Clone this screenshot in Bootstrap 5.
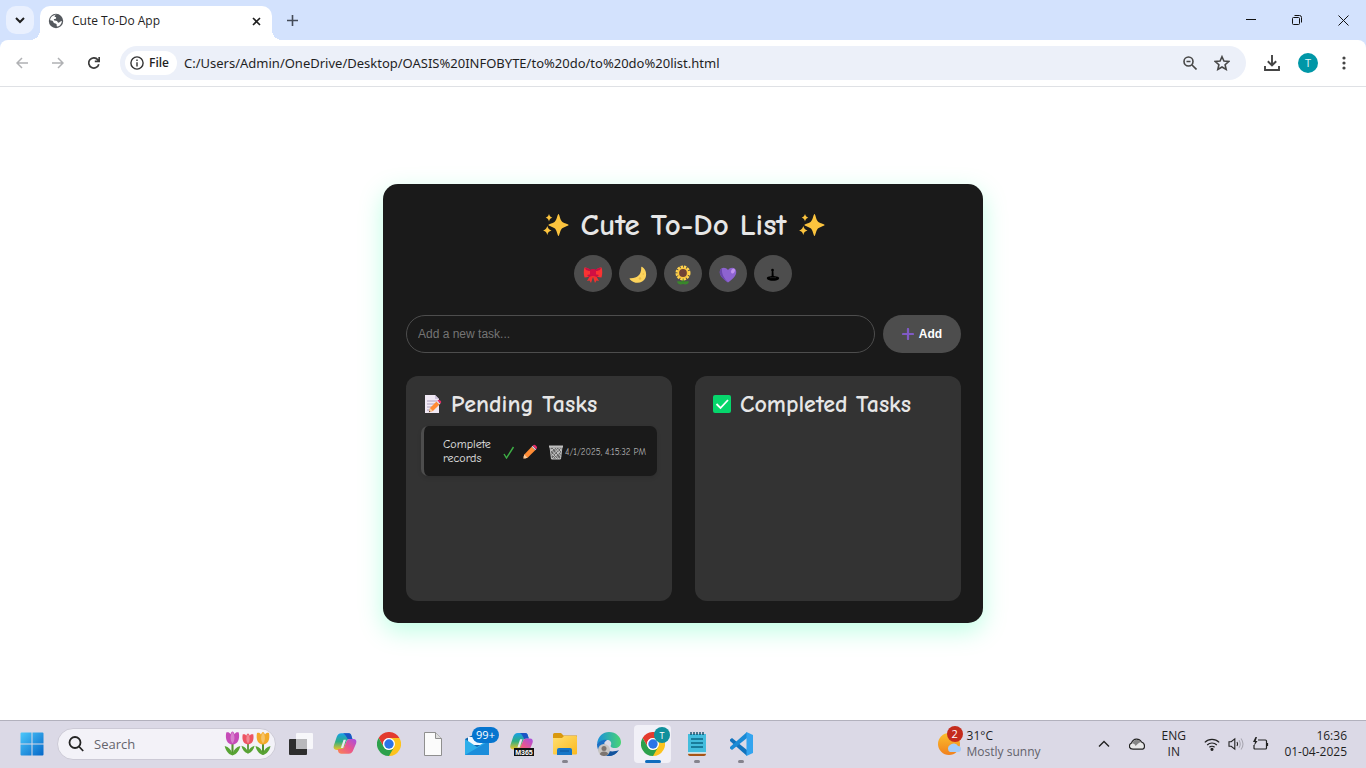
<!DOCTYPE html>
<html lang="en">
<head>
<meta charset="utf-8">
<meta name="viewport" content="width=device-width, initial-scale=1">
<title>Cute To-Do App</title>
<link href="https://cdn.jsdelivr.net/npm/bootstrap@5.3.0/dist/css/bootstrap.min.css" rel="stylesheet">
<style>
  body { font-family: "Open Sans", "Noto Sans", sans-serif; font-size: 12px; line-height: 16px; color: #1f1f1f; background: #fff; }
  button { font: inherit; color: inherit; border: 0; background: none; padding: 0; display: inline-flex; align-items: center; justify-content: center; }
  svg { display: block; flex: none; }

  /* window frame */
  .titlebar { background: #d3e2fd; height: 40px; padding-left: 6px; }
  .tab-search { width: 28px; height: 28px; border-radius: 10px; background: #e9f0fe; margin-top: 6px; }
  .tab-page { position: relative; width: 232px; height: 34px; margin: 6px 0 0 6px; padding: 0 8px 4px; border-radius: 10px 10px 0 0; background: #fff; }
  .tab-page::before, .tab-page::after { content: ""; position: absolute; bottom: 0; width: 10px; height: 10px; }
  .tab-page::before { left: -10px; background: radial-gradient(circle at 0 0, transparent 10px, #fff 10px); }
  .tab-page::after { right: -10px; background: radial-gradient(circle at 100% 0, transparent 10px, #fff 10px); }
  .tab-close { width: 16px; height: 16px; }
  .tab-new { width: 28px; height: 28px; margin: 6px 0 0 6px; }
  .win-btn { width: 46px; height: 40px; }
  .toolbar-wrap { background: #d3e2fd; }
  .toolbar { background: #fff; height: 47px; padding: 0 4px; border-bottom: 1px solid #dfe1e5; border-radius: 8px 8px 0 0; }
  .tool-btn { width: 36px; height: 34px; }
  .address { height: 34px; border-radius: 17px; background: #ecf0f9; margin: 0 8px; padding: 0 8px 0 5px; min-width: 0; }
  .file-chip { height: 24px; border-radius: 12px; background: #fff; padding: 0 8px 0 5px; gap: 5px; font-weight: 600; }
  .address input { border: 0; background: none; outline: 0; padding: 0 0 0 7px; min-width: 0; font-size: 13px; font-family: "Noto Sans", sans-serif; color: #1f1f1f; }
  .addr-btn { width: 32px; height: 32px; }
  .avatar { width: 20px; height: 20px; border-radius: 50%; background: #0097a7; color: #e3f6f8; font-size: 11px; }

  /* to-do app */
  .todo-app { width: 100%; max-width: 600px; padding: 23px 22px 22px 23px; border-radius: 15px; background: #1a1a1a; color: #e6e6e6; box-shadow: 0 8px 24px rgba(0, 255, 150, .26); font-family: "Comic Neue", "Inter", sans-serif; }
  .todo-title { font-size: 31px; line-height: 36px; font-weight: 700; gap: 12px; margin: 0 0 12px; }
  .theme-row { gap: 7px; margin-bottom: 23px; padding-right: 1px; }
  .theme-btn { width: 38px; height: 37px; border-radius: 50%; background: #4d4d4d; padding-top: 2px; }
  .task-entry { gap: 8px; margin-bottom: 23px; }
  .task-entry input { height: 38px; min-width: 0; border: 1px solid #4d4d4d; border-radius: 19px; background: #1a1a1a; color: #e6e6e6; padding: 0 11px; font-family: "Liberation Sans", sans-serif; font-size: 12px; }
  .task-entry input::placeholder { color: #757575; }
  .add-btn { width: 78px; height: 38px; border-radius: 19px; background: #4d4d4d; color: #fff; font-family: "Liberation Sans", sans-serif; font-weight: 700; gap: 5px; }
  .task-cols { gap: 23px; }
  .task-col { flex: 1 1 0; min-width: 0; min-height: 225px; padding: 15px; border-radius: 12px; background: #333; }
  .task-col h2 { font-size: 24px; line-height: 26px; font-weight: 700; gap: 9px; margin: 0 0 9px; padding-left: 3px; white-space: nowrap; }
  .task-item { min-height: 50px; border-left: 3px solid #4d4d4d; border-radius: 7px; background: #1a1a1a; padding: 0 11px 0 19px; box-shadow: 0 2px 4px rgba(0, 0, 0, .1); }
  .task-name { width: 54px; font-size: 12px; line-height: 14px; }
  .task-tools { gap: 6px; padding-top: 2px; }
  .task-tools button { width: 15px; height: 20px; }
  .task-tools button:last-child { margin-left: 5px; }
  .task-time { color: #b3b3b3; font-size: 9px; line-height: 12px; white-space: nowrap; font-weight: 400; padding-top: 2px; }

  /* taskbar */
  .taskbar { background: #dbd9e6; height: 48px; border-top: 1px solid #b2b1bd; padding: 0 0 2px 10px; }
  .dock-btn { position: relative; width: 44px; height: 45px; }
  .dock-btn.is-open::after { content: ""; position: absolute; bottom: 3px; left: 19px; width: 6px; height: 3px; border-radius: 2px; background: #85838d; }
  .dock-btn.is-active::before { content: ""; position: absolute; left: 3px; top: 4px; width: 37px; height: 38px; border-radius: 4px; background: #f1f0f7; }
  .dock-btn.is-active::after { left: 14px; width: 16px; background: #0f6cbd; }
  .dock-btn svg { position: relative; }
  .search-box { width: 219px; height: 32px; margin: 0 3px; border: 1px solid #cccad6; border-radius: 16px; background: #f3f2f8; padding: 0 4px 0 10px; }
  .search-box input { width: 100px; border: 0; outline: 0; background: none; padding: 0; margin-left: 10px; font-size: 13px; }
  .search-box input::placeholder { color: #65646c; opacity: 1; }
  .count-badge { position: absolute; left: 17px; top: 6px; width: 27px; height: 16px; border-radius: 8px; background: #0675cf; color: #fff; font-size: 11px; }
  .weather { width: 149px; gap: 5px; justify-content: flex-start; text-align: left; position: relative; }
  .weather-count { position: absolute; left: 9px; top: -2px; width: 16px; height: 16px; border-radius: 50%; background: #c42b1c; color: #fff; font-size: 11px; text-align: center; }
  .text-soft { color: #62616b; }
  .tray-btn { height: 44px; padding: 0 8px; }
  .tray-cloud { padding-right: 9px; }
  .tray-quick { gap: 8px; padding: 0 6px 0 10px; }
  .clock { width: 91px; padding-right: 19px; text-align: right; justify-content: flex-end; }
</style>
</head>
<body class="d-flex flex-column vh-100 overflow-hidden">

<svg width="0" height="0" class="position-absolute" aria-hidden="true">
  <defs>
    <linearGradient id="gWin" x1="0" y1="0" x2="1" y2="1"><stop offset="0" stop-color="#4cc8fb"/><stop offset="1" stop-color="#0567c8"/></linearGradient>
    <linearGradient id="gCopA" x1="0" y1="0" x2="0" y2="1"><stop offset="0" stop-color="#189fe8"/><stop offset=".5" stop-color="#2fae82"/><stop offset="1" stop-color="#f1c426"/></linearGradient>
    <linearGradient id="gCopB" x1="1" y1="0" x2="0" y2="1"><stop offset="0" stop-color="#a44ee6"/><stop offset=".5" stop-color="#e9558d"/><stop offset="1" stop-color="#fb8750"/></linearGradient>
    <linearGradient id="gFolder" x1="0" y1="0" x2="1" y2="1"><stop offset="0" stop-color="#ffdf71"/><stop offset="1" stop-color="#fbb91e"/></linearGradient>
    <linearGradient id="gEdge" x1="0" y1="0" x2="1" y2="0"><stop offset="0" stop-color="#1b8fdc"/><stop offset="1" stop-color="#48d573"/></linearGradient>
    <linearGradient id="gSun" x1="0" y1="0" x2="0" y2="1"><stop offset="0" stop-color="#fbc02d"/><stop offset="1" stop-color="#f1801d"/></linearGradient>
    <symbol id="sparkles" viewBox="0 0 26 26"><g fill="#fcc43e"><path d="M15.500 2c1 0 1.400 5.500 3.400 7.500 2 1.900 6.600 2.400 6.600 3.500s-4.600 1.700-6.600 3.600c-2 2-2.400 7.400-3.400 7.400s-1.500-5.400-3.500-7.400c-1.900-1.900-6.500-2.500-6.500-3.600s4.600-1.600 6.500-3.500c2-2 2.500-7.500 3.500-7.500z"/><path d="M6 2c.6 2.100 1.200 2.900 3.300 3.700C7.200 6.500 6.600 7.300 6 9.400 5.400 7.300 4.800 6.500 2.700 5.700 4.800 4.900 5.400 4.100 6 2zM4.300 14c.7 2.500 1.500 3.500 4.200 4.400-2.700.9-3.500 1.900-4.200 4.500-.7-2.600-1.500-3.600-4.200-4.500C2.800 17.500 3.600 16.500 4.300 14z"/></g></symbol>
    <symbol id="copilot" viewBox="0 0 26 24"><path d="M9 1h8c2 0 2.500 1 3 3l1 3h-3c-2 0-3 1-3.500 3l-2 6c-.7 2-2 3-4 3H4c-3 0-4-2-3-5L4 5c.8-2.500 2.500-4 5-4z" fill="url(#gCopA)"/><path d="M11 1h6c2 0 2.500 1 3 3l1 3h-3l-2 .5C14 4.500 14 2.500 11 1z" fill="#1c55c5"/><path d="M17 23H9c-2 0-3-1-3.500-3L5 18h4c2 0 3-1 3.500-3l2-5c.7-2 2-3 4-3H22c3 0 4 2 3 5l-3 7c-.8 2.500-2.500 4-5 4z" fill="url(#gCopB)"/><path d="M11 17l3-9h-2.500l-3 9z" fill="#e9e8f4"/></symbol>
    <symbol id="chrome" viewBox="0 0 24 24"><path d="M12 12V6h10.400A12 12 0 0 1 12 24z" fill="#fcc31e"/><path d="M12 12l5.200 3L12 24z" fill="#fcc31e"/><path d="M1.600 6A12 12 0 0 1 22.400 6H12a6 6 0 0 0-5.200 9z" fill="#e33b2e"/><path d="M1.600 6l5.200 9A6 6 0 0 0 17.200 15L12 24A12 12 0 0 1 1.600 6z" fill="#2da14c"/><circle cx="12" cy="12" r="6" fill="#fff"/><circle cx="12" cy="12" r="4.700" fill="#2b74e8"/></symbol>
    <symbol id="pencil" viewBox="0 0 16 16"><path d="M1 15l1.300-4.600 7.400-7.600 3.500 3.400-7.600 7.500z" fill="#ff8c35"/><path d="M1 15l1.300-4.600 3.300 3.300z" fill="#f7cda0"/><path d="M1 15l.5-1.700 1.300 1.200z" fill="#443a3a"/><path d="M9.700 2.800l1-1 3.500 3.400-1 1z" fill="#d9d5e3"/><path d="M10.700 1.800c1.200-1.200 2-1.300 3.300-.1 1.500 1.300 1.400 2.200.2 3.500z" fill="#e72c68"/></symbol>
    <symbol id="tulip" viewBox="0 0 16 24"><path d="M8 10v13" stroke="#54932f" stroke-width="2"/><path d="M8 23.500C4 22.500 1.500 19 .5 14.500c4 1 6 3.500 7.500 7 1.500-3.500 3.500-6 7.500-7-1 4.500-3.500 8-7.500 9z" fill="#58a334"/><path d="M2 1.500C4 1 5 1.500 6 3c.7-1.500 1.200-2.500 2-2.500s1.300 1 2 2.500c1-1.500 2-2 4-1.500C15.300 8 13 13 8 13S.7 8 2 1.500z" fill="currentColor"/><path d="M8 1c2.500 3 2.500 8 0 11-2.500-3-2.500-8 0-11z" fill="#fff" opacity=".3"/></symbol>
  </defs>
</svg>

<header>
  <div class="titlebar d-flex">
    <button class="tab-search" type="button" aria-label="Search tabs"><svg width="10" height="7" viewBox="0 0 10 7" fill="none" stroke="#1f1f1f" stroke-width="2"><path d="M1 1l4 4 4-4"/></svg></button>
    <div class="tab-page d-flex align-items-center">
      <svg width="16" height="16" viewBox="0 0 16 16"><circle cx="8" cy="8" r="7.200" fill="#55595e"/><path d="M9 1.800c-2 .4-2.700 1.200-2.300 2 .7.300 1.500.2 1.500 1.200-.3 1.300-2 .6-2.400 1.600 0 1 .8 1 2.200 1.100 1.700.2 1.300 1.800 2.700 2 1.200-.4 1.600-1.700 3.200-1.700-.2 2.500-1.500 4.600-4 5.600-1 0-1.400-.5-1.200-1.500.2-1.500-1.100-1.500-2.200-1.800-1.400-.5-.8-1.800-2-2.600L2.100 7.200C2.500 4 5 1.700 9 1.800z" fill="#fff"/></svg>
      <span class="ms-2 me-auto">Cute To-Do App</span>
      <button class="tab-close" type="button" aria-label="Close tab"><svg width="9" height="9" viewBox="0 0 9 9" stroke="#1f1f1f" stroke-width="1.600"><path d="M1 1l7 7M8 1L1 8"/></svg></button>
    </div>
    <button class="tab-new" type="button" aria-label="New tab"><svg width="11" height="11" viewBox="0 0 11 11" stroke="#444b58" stroke-width="1.600"><path d="M5.500 0v11M0 5.500h11"/></svg></button>
    <div class="d-flex ms-auto">
      <button class="win-btn" type="button" aria-label="Minimise"><svg width="10" height="10" viewBox="0 0 10 10" stroke="#111"><path d="M0 4.500h10"/></svg></button>
      <button class="win-btn" type="button" aria-label="Restore"><svg width="10" height="10" viewBox="0 0 10 10" fill="none" stroke="#111"><rect x=".5" y="2.500" width="7" height="7" rx="1"/><path d="M2.500.5h5a2 2 0 0 1 2 2v5"/></svg></button>
      <button class="win-btn" type="button" aria-label="Close"><svg width="11" height="11" viewBox="0 0 11 11" stroke="#111"><path d="M.5.5l10 10M10.500.5l-10 10"/></svg></button>
    </div>
  </div>
  <div class="toolbar-wrap">
    <div class="toolbar d-flex align-items-center">
      <button class="tool-btn" type="button" aria-label="Back"><svg width="12" height="12" viewBox="0 0 12 12" fill="none" stroke="#b0b1b4" stroke-width="1.500"><path d="M12 6H1M6 1L1 6l5 5"/></svg></button>
      <button class="tool-btn" type="button" aria-label="Forward"><svg width="12" height="12" viewBox="0 0 12 12" fill="none" stroke="#b0b1b4" stroke-width="1.500"><path d="M0 6h11M6 1l5 5-5 5"/></svg></button>
      <button class="tool-btn" type="button" aria-label="Reload"><svg width="12" height="12" viewBox="0 0 12 12" fill="none" stroke="#3c3c3c" stroke-width="1.700"><path d="M10.800 7.200A5.100 5.100 0 1 1 9.800 2.700L11 4M11.200 0v4.400H6.800"/></svg></button>
      <div class="address d-flex align-items-center flex-grow-1">
        <button class="file-chip" type="button"><svg width="14" height="14" viewBox="0 0 14 14" fill="none" stroke="#333" stroke-width="1.400"><circle cx="7" cy="7" r="6.100"/><path d="M7 6.200v4.300M7 3.500V5"/></svg>File</button>
        <input class="flex-grow-1" type="text" aria-label="Address" value="C:/Users/Admin/OneDrive/Desktop/OASIS%20INFOBYTE/to%20do/to%20do%20list.html">
        <button class="addr-btn" type="button" aria-label="Zoom"><svg width="14" height="14" viewBox="0 0 14 14" fill="none" stroke="#474747" stroke-width="1.600"><circle cx="5.500" cy="5.500" r="4.500"/><path d="M9 9l4.500 4.500M3.500 5.500h4"/></svg></button>
        <button class="addr-btn" type="button" aria-label="Bookmark"><svg width="16" height="16" viewBox="0 0 15 15" fill="none" stroke="#474747" stroke-width="1.500"><path d="M7.500 1.600l1.800 4.100 4.500.4-3.400 3 1 4.400-3.900-2.300-3.900 2.300 1-4.400-3.400-3 4.500-.4z"/></svg></button>
      </div>
      <button class="tool-btn" type="button" aria-label="Downloads"><svg width="16" height="16" viewBox="0 0 16 16" fill="none" stroke="#444" stroke-width="1.900"><path d="M8 0v10M3.800 6.200L8 10.300l4.200-4.100M1 11v4h14v-4"/></svg></button>
      <button class="tool-btn" type="button" aria-label="Profile"><span class="avatar d-flex align-items-center justify-content-center">T</span></button>
      <button class="tool-btn" type="button" aria-label="Menu"><svg width="4" height="14" viewBox="0 0 4 14" fill="#444"><circle cx="2" cy="2" r="1.600"/><circle cx="2" cy="7" r="1.600"/><circle cx="2" cy="12" r="1.600"/></svg></button>
    </div>
  </div>
</header>

<main class="d-flex flex-grow-1 align-items-center justify-content-center">
  <section class="todo-app">
    <h1 class="todo-title d-flex align-items-center justify-content-center"><svg width="26" height="26"><use href="#sparkles"/></svg>Cute To-Do List<svg width="26" height="26"><use href="#sparkles"/></svg></h1>
    <div class="theme-row d-flex justify-content-center">
      <button class="theme-btn" type="button" aria-label="Bow theme"><svg width="20" height="18" viewBox="0 0 20 18"><path d="M8 8l-4 7 2.500-.6L8 17l2-6 2 6 1.500-2.600L16 15l-4-7z" fill="#f3312f"/><path d="M9 6C6 2 3 1 1.500 1.500.5 4 .5 8 1.500 11.500c3 0 5.500-1 7.500-3zM11 6c3-4 6-5 7.500-4.500 1 2.500 1 6.500 0 10-3 0-5.500-1-7.500-3z" fill="#fa3332"/><path d="M2 2c3-.5 5 1 7 3H6L3 4zM18 2c-3-.5-5 1-7 3h3l3-1zM4 9l5-1v2l-3 1zM16 9l-5-1v2l3 1z" fill="#c70f43"/><rect x="7" y="3" width="6" height="7" rx="2" fill="#d10f43"/></svg></button>
      <button class="theme-btn" type="button" aria-label="Moon theme"><svg width="18" height="18" viewBox="0 0 18 18"><path d="M13 .8c4 2.500 5 7.200 3.400 11.200C14 17.400 6 18.800 1 13.500c-.7-.8-.4-1.300.4-1.200C8.500 12.500 12.500 8.500 12.200 1.600c0-.7.300-1.100.8-.8z" fill="#fdd35b"/><circle cx="11" cy="12.500" r="1.300" fill="#eabb43"/><circle cx="14.300" cy="8" r=".8" fill="#eabb43"/></svg></button>
      <button class="theme-btn" type="button" aria-label="Sunflower theme"><svg width="18" height="20" viewBox="0 0 18 20"><path d="M8 12h2v6H8z" fill="#35832a"/><path d="M9 19c-3 1-5.500 0-6-2.500 3-.5 5 0 6 1.200 1-1.200 3-1.700 6-1.200-.5 2.500-3 3.500-6 2.500z" fill="#39882b"/><circle cx="9" cy="8" r="5.900" fill="none" stroke="#ffd24f" stroke-width="3.200" stroke-dasharray="2.300 .8"/><circle cx="9" cy="8" r="5.500" fill="#fbc83f"/><circle cx="9" cy="8" r="3.900" fill="#704336"/></svg></button>
      <button class="theme-btn" type="button" aria-label="Heart theme"><svg width="18" height="18" viewBox="0 0 18 18"><path d="M9 16.500C2 11.500 0 8 1 4.500 2 1.300 6.500.6 9 4c2.500-3.400 7-2.700 8 .5 1 3.500-1 7-8 12z" fill="#8d63d0"/><path d="M1 4.500C0 8 2 11.500 9 16.500 5 12 2.500 8 3 3 2 3 1.300 3.600 1 4.500z" fill="#6947aa"/><ellipse cx="14" cy="5" rx="1.800" ry="2.700" transform="rotate(30 14 5)" fill="#c092ef"/></svg></button>
      <button class="theme-btn" type="button" aria-label="Dark theme"><svg width="14" height="14" viewBox="0 0 14 14"><circle cx="6.500" cy="2" r="1.300"/><path d="M5.800 2h1.500l.4 6 4 .8c1.500.5 2 1.500.8 2.600-2.500 1.800-8.500 1.800-11 0C.3 10.300.8 9.200 2 8.800L5.600 8z"/><path d="M4 9.700h6" stroke="#4d4d4d" stroke-width=".4"/></svg></button>
    </div>
    <form class="task-entry d-flex" onsubmit="return false">
      <input class="flex-grow-1" type="text" aria-label="New task" placeholder="Add a new task...">
      <button class="add-btn" type="submit"><svg width="12" height="12" viewBox="0 0 12 12" stroke="#805ac6" stroke-width="2.200" stroke-linecap="round"><path d="M6 1v10M1 6h10"/></svg>Add</button>
    </form>
    <div class="task-cols d-flex">
      <section class="task-col">
        <h2 class="d-flex align-items-center"><svg width="18" height="20" viewBox="0 0 18 20"><path d="M1 1h10l4 4v14H1z" fill="#f1e9f5"/><path d="M11 1l4 4h-4z" fill="#cfc3dd"/><path d="M3 7h10M3 10h8M3 13h6M3 16h6" stroke="#aca0bd"/><use href="#pencil" x="4" y="5" width="14" height="14"/></svg>Pending Tasks</h2>
        <ul class="list-unstyled mb-0">
          <li class="task-item d-flex align-items-center">
            <span class="task-name">Complete records</span>
            <span class="task-tools d-flex align-items-center flex-grow-1 ms-1">
              <button type="button" aria-label="Complete"><svg width="12" height="13" viewBox="0 0 12 13" fill="none" stroke="#3daf45" stroke-width="1.400"><path d="M1 8l2.500 4L10.500 1"/></svg></button>
              <button type="button" aria-label="Edit"><svg width="16" height="16"><use href="#pencil"/></svg></button>
              <button type="button" aria-label="Delete"><svg width="14" height="15" viewBox="0 0 14 15" fill="none" stroke="#bfbfbf"><path d="M1 2l1.500 12h9L13 2z" fill="#666"/><path d="M0 1.500h14" stroke-width="2"/><path d="M2 6l3-3 7 9M2.500 11l8-8 2 3M2 4l8 10M3 14l9-9M7 3l5 6M2.500 8.500L8 14"/></svg></button>
            </span>
            <time class="task-time">4/1/2025, 4:15:32 PM</time>
          </li>
        </ul>
      </section>
      <section class="task-col">
        <h2 class="d-flex align-items-center"><svg width="18" height="18" viewBox="0 0 18 18"><rect width="18" height="18" rx="2" fill="#06d66c"/><path d="M3.500 9l4 4 7.500-8" fill="none" stroke="#fff" stroke-width="1.800"/></svg>Completed Tasks</h2>
      </section>
    </div>
  </section>
</main>

<footer class="taskbar d-flex align-items-center">
  <button class="dock-btn" type="button" aria-label="Start"><svg width="24" height="24" viewBox="0 0 24 24" fill="url(#gWin)"><path d="M1.500.5h10v11H.5v-10a1 1 0 0 1 1-1zM12.500.5h10a1 1 0 0 1 1 1v10h-11zM.5 12.500h11v11h-10a1 1 0 0 1-1-1zM12.500 12.500h11v10a1 1 0 0 1-1 1h-10z"/></svg></button>
  <label class="search-box d-flex align-items-center">
    <svg width="16" height="16" viewBox="0 0 16 16" fill="none" stroke="#242424" stroke-width="1.800"><circle cx="7" cy="6.500" r="5.500"/><path d="M11 10.500l4.200 4.500"/></svg>
    <input type="text" placeholder="Search" aria-label="Search">
    <span class="d-flex ms-auto"><svg width="17" height="25" color="#c64bb8"><use href="#tulip"/></svg><svg width="14" height="25" color="#ed5463"><use href="#tulip"/></svg><svg width="16" height="25" color="#f2a928"><use href="#tulip"/></svg></span>
  </label>
  <button class="dock-btn" type="button" aria-label="Task view"><svg width="24" height="24" viewBox="0 0 24 24"><rect x="0" y="7" width="18" height="16" rx="1" fill="#2e2e2e"/><rect x="7" y="1" width="17" height="16" rx="1" fill="#fafafc" opacity=".9"/><path d="M7 7h11v10H7z" fill="#b8b8bb"/></svg></button>
  <button class="dock-btn" type="button" aria-label="Copilot"><svg width="24" height="23"><use href="#copilot"/></svg></button>
  <button class="dock-btn" type="button" aria-label="Chrome"><svg width="24" height="24"><use href="#chrome"/></svg></button>
  <button class="dock-btn" type="button" aria-label="Document"><svg width="18" height="24" viewBox="0 0 18 24" fill="#fbfbfb" stroke="#8f8f8f"><path d="M.5.500h11l6 6v17H.5z"/><path d="M11.500.5v6h6" fill="#dedede"/></svg></button>
  <button class="dock-btn" type="button" aria-label="Mail"><svg width="24" height="22" viewBox="0 0 24 22"><path d="M0 6l12-6 12 6v16H0z" fill="#1165ad"/><path d="M3 4h18v8H3z" fill="#f1f8ff"/><path d="M0 6l12 8 12-8v16H0z" fill="#2daeea"/><path d="M0 22l24-14v14z" fill="#1b8ddb"/></svg><span class="count-badge d-flex align-items-center justify-content-center">99+</span></button>
  <button class="dock-btn" type="button" aria-label="Microsoft 365"><svg width="25" height="24" viewBox="0 0 25 24"><use href="#copilot" x="0" y="0" width="25" height="22"/><rect x="5" y="16" width="20" height="8" fill="#111"/><text x="15" y="22.700" text-anchor="middle" font-size="7" font-weight="700" fill="#fff" font-family="Liberation Sans">M365</text></svg></button>
  <button class="dock-btn is-open" type="button" aria-label="File Explorer"><svg width="24" height="22" viewBox="0 0 24 22"><path d="M0 1.500Q0 0 1.500 0H8l2.500 2.500H24V10H0z" fill="#d9980e"/><path d="M0 5h9l2-2h12q1 0 1 1v16.500q0 1-1 1H1q-1 0-1-1z" fill="url(#gFolder)"/><path d="M4 22v-5q0-2 2-2h11q2 0 2 2v5z" fill="#1675c7"/><path d="M7 18h9" stroke="#0a559b"/></svg></button>
  <button class="dock-btn" type="button" aria-label="Edge"><svg width="24" height="24" viewBox="0 0 24 24"><path d="M0 12C1 4 6 0 12 0c7 0 12 5 12 10 0 4-3 6-6 6-4 0-5-1.500-4-3 1-3-1-5-4-5-5 0-9 3-10 4z" fill="url(#gEdge)"/><path d="M0 12c2-3 7-5 10-4-3 2-4 5-3 8 2 5 8 7 14 3-3 4-8 6-13 4.500C3 22 0 18 0 12z" fill="#1b70c5"/><path d="M8 11c-2 6 4 11 14 7-4 6-9 7-13 5-4-3-4-9-1-12z" fill="#12539d"/><circle cx="7" cy="18" r="6" fill="#c9c5c2"/><circle cx="7" cy="16.500" r="2.500" fill="#7e7570"/><path d="M2.800 22.300q.7-2.800 4.200-2.800t4.200 2.800A6 6 0 0 1 2.800 22.300z" fill="#7e7570"/></svg></button>
  <button class="dock-btn is-open is-active" type="button" aria-label="Chrome, profile T"><svg width="34" height="34" viewBox="0 0 34 34"><use href="#chrome" x="5" y="5" width="24" height="24"/><circle cx="26" cy="8" r="8" fill="#10909c"/><text x="26" y="11.500" text-anchor="middle" font-size="9" fill="#fff">T</text></svg></button>
  <button class="dock-btn is-open" type="button" aria-label="Notepad"><svg width="18" height="24" viewBox="0 0 18 24"><path d="M0 19h18v3q0 2-2 2H2q-2 0-2-2z" fill="#a65415"/><path d="M0 2h18v19H0z" fill="#43bddd"/><path d="M0 21h18" stroke="#e3f4f8" stroke-width="1.500"/><path d="M3 0v3M6 0v3M9 0v3M12 0v3M15 0v3" stroke="#124b66" stroke-width="1.400"/><path d="M3 7h12M3 11h12M3 15h12" stroke="#0c6785" stroke-width="1.600"/></svg></button>
  <button class="dock-btn is-open" type="button" aria-label="Visual Studio Code"><svg width="24" height="24" viewBox="0 0 24 24"><path d="M1 7.500L3 6l15 12v6L1 9z" fill="#1273bd"/><path d="M1 16.500L3 18 18 6V0L1 15z" fill="#1a8ad5"/><path d="M17.500 0L24 3v18l-6.500 3z" fill="#33a4ef"/></svg></button>

  <div class="d-flex align-items-center ms-auto">
    <button class="weather" type="button"><svg width="24" height="24" viewBox="0 0 24 24"><circle cx="11" cy="12" r="11" fill="url(#gSun)"/><path d="M12 20a4 4 0 0 1 0-7 5 5 0 0 1 8 1 3 3 0 0 1 0 6z" fill="#a5cdf9"/></svg><span class="weather-count">2</span><span>31°C<br><span class="text-soft">Mostly sunny</span></span></button>
    <button class="tray-btn" type="button" aria-label="Hidden icons"><svg width="18" height="8" viewBox="0 0 18 8" fill="none" stroke="#222" stroke-width="1.400"><path d="M4 6.500l5-5 5 5"/></svg></button>
    <button class="tray-btn tray-cloud" type="button" aria-label="OneDrive"><svg width="16" height="12" viewBox="0 0 16 12"><path d="M4 11.200C-.5 11.200-.5 6.500 2.500 5 4.500 0 10 0 12.500 4c4 1 4 7.200 0 7.200z" fill="#e7e7e7" stroke="#222" stroke-width="1.200"/><path d="M3 5.200C5 1 9.500.8 12 4 9.500 5 8 6.500 6.500 8 6 6 4.500 5.200 3 5.200z" fill="#858585"/></svg></button>
    <button class="tray-btn" type="button"><span>ENG<br>IN</span></button>
    <button class="tray-btn tray-quick" type="button" aria-label="Network, volume, battery"><svg width="16" height="14" viewBox="0 0 16 14" fill="none" stroke="#222" stroke-width="1.200"><path d="M.8 5.300a10.200 10.200 0 0 1 14.400 0M3.200 8a6.800 6.800 0 0 1 9.600 0M5.400 10.300a3.700 3.700 0 0 1 5.200 0"/><circle cx="8" cy="12.300" r="1" fill="#222"/></svg><svg width="16" height="14" viewBox="0 0 16 14" fill="none" stroke="#222" stroke-width="1.100"><path d="M1 4.700h2.200L6.800 1.800v10.400L3.200 9.300H1zM9 5q1.200 2 0 4"/><path d="M11 3.200q2.500 3.800 0 7.600M13 1.500q4 5.500 0 11" stroke="#a9a8b2"/></svg><svg width="17" height="14" viewBox="0 0 17 14" fill="none" stroke="#222" stroke-width="1.200"><path d="M6 3h7.500q1 0 1 1v7q0 1-1 1H3q-1 0-1-1V8"/><path d="M15.500 6v3"/><path d="M3.500 0L1 5h2l-1 4 3.500-5H3.700L5 0z" fill="#222" stroke="none"/></svg></button>
    <button class="clock" type="button"><span>16:36<br>01-04-2025</span></button>
  </div>
</footer>
<script src="https://cdn.jsdelivr.net/npm/bootstrap@5.3.0/dist/js/bootstrap.bundle.min.js"></script>
</body>
</html>
